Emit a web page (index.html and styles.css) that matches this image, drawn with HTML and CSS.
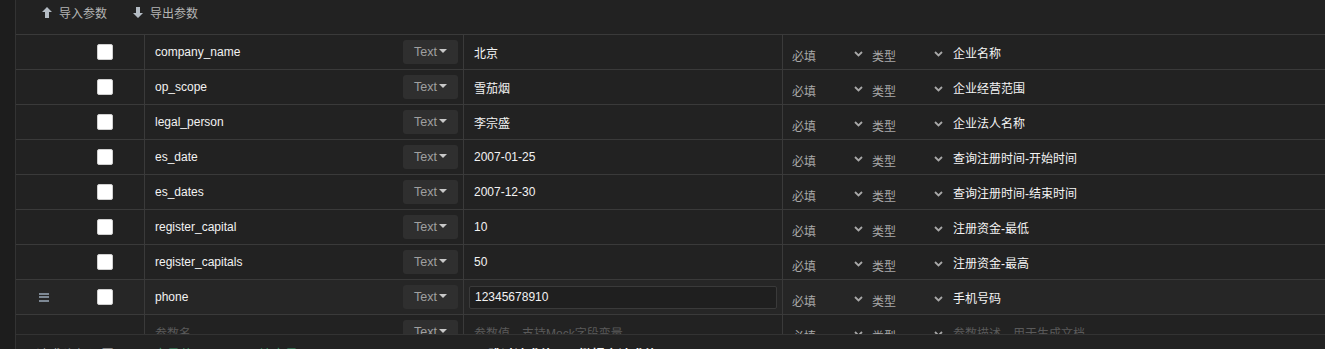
FILE: index.html
```html
<!DOCTYPE html>
<html lang="zh">
<head>
<meta charset="utf-8">
<link rel="stylesheet" href="styles.css">
</head>
<body>
<div class="page">
  <div class="strip"></div>
  <div class="main">
    <div class="toolbar">
      <span class="tool"><svg class="arr" width="10" height="11" viewBox="0 0 10 11"><path d="M5 0 L10 5 L7 5 L7 11 L3 11 L3 5 L0 5 Z" fill="#b4bcc4"/></svg>导入参数</span>
      <span class="tool"><svg class="arr" width="10" height="11" viewBox="0 0 10 11"><path d="M5 11 L10 6 L7 6 L7 0 L3 0 L3 6 L0 6 Z" fill="#b4bcc4"/></svg>导出参数</span>
    </div>
    <div class="table">
      <div class="row">
        <div class="c1"><span class="handle"></span><span class="cb"></span></div>
        <div class="c2"><span class="name">company_name</span><span class="type">Text<i class="caret"></i></span></div>
        <div class="c3"><span class="val">北京</span></div>
        <div class="c4"><span class="sel">必填<svg class="chev" width="9" height="6" viewBox="0 0 9 6"><path d="M1 1 L4.5 4.5 L8 1" stroke="#a8a8a8" stroke-width="1.8" fill="none"/></svg></span><span class="sel">类型<svg class="chev" width="9" height="6" viewBox="0 0 9 6"><path d="M1 1 L4.5 4.5 L8 1" stroke="#a8a8a8" stroke-width="1.8" fill="none"/></svg></span><span class="desc">企业名称</span></div>
      </div>
      <div class="row">
        <div class="c1"><span class="handle"></span><span class="cb"></span></div>
        <div class="c2"><span class="name">op_scope</span><span class="type">Text<i class="caret"></i></span></div>
        <div class="c3"><span class="val">雪茄烟</span></div>
        <div class="c4"><span class="sel">必填<svg class="chev" width="9" height="6" viewBox="0 0 9 6"><path d="M1 1 L4.5 4.5 L8 1" stroke="#a8a8a8" stroke-width="1.8" fill="none"/></svg></span><span class="sel">类型<svg class="chev" width="9" height="6" viewBox="0 0 9 6"><path d="M1 1 L4.5 4.5 L8 1" stroke="#a8a8a8" stroke-width="1.8" fill="none"/></svg></span><span class="desc">企业经营范围</span></div>
      </div>
      <div class="row">
        <div class="c1"><span class="handle"></span><span class="cb"></span></div>
        <div class="c2"><span class="name">legal_person</span><span class="type">Text<i class="caret"></i></span></div>
        <div class="c3"><span class="val">李宗盛</span></div>
        <div class="c4"><span class="sel">必填<svg class="chev" width="9" height="6" viewBox="0 0 9 6"><path d="M1 1 L4.5 4.5 L8 1" stroke="#a8a8a8" stroke-width="1.8" fill="none"/></svg></span><span class="sel">类型<svg class="chev" width="9" height="6" viewBox="0 0 9 6"><path d="M1 1 L4.5 4.5 L8 1" stroke="#a8a8a8" stroke-width="1.8" fill="none"/></svg></span><span class="desc">企业法人名称</span></div>
      </div>
      <div class="row">
        <div class="c1"><span class="handle"></span><span class="cb"></span></div>
        <div class="c2"><span class="name">es_date</span><span class="type">Text<i class="caret"></i></span></div>
        <div class="c3"><span class="val">2007-01-25</span></div>
        <div class="c4"><span class="sel">必填<svg class="chev" width="9" height="6" viewBox="0 0 9 6"><path d="M1 1 L4.5 4.5 L8 1" stroke="#a8a8a8" stroke-width="1.8" fill="none"/></svg></span><span class="sel">类型<svg class="chev" width="9" height="6" viewBox="0 0 9 6"><path d="M1 1 L4.5 4.5 L8 1" stroke="#a8a8a8" stroke-width="1.8" fill="none"/></svg></span><span class="desc">查询注册时间-开始时间</span></div>
      </div>
      <div class="row">
        <div class="c1"><span class="handle"></span><span class="cb"></span></div>
        <div class="c2"><span class="name">es_dates</span><span class="type">Text<i class="caret"></i></span></div>
        <div class="c3"><span class="val">2007-12-30</span></div>
        <div class="c4"><span class="sel">必填<svg class="chev" width="9" height="6" viewBox="0 0 9 6"><path d="M1 1 L4.5 4.5 L8 1" stroke="#a8a8a8" stroke-width="1.8" fill="none"/></svg></span><span class="sel">类型<svg class="chev" width="9" height="6" viewBox="0 0 9 6"><path d="M1 1 L4.5 4.5 L8 1" stroke="#a8a8a8" stroke-width="1.8" fill="none"/></svg></span><span class="desc">查询注册时间-结束时间</span></div>
      </div>
      <div class="row">
        <div class="c1"><span class="handle"></span><span class="cb"></span></div>
        <div class="c2"><span class="name">register_capital</span><span class="type">Text<i class="caret"></i></span></div>
        <div class="c3"><span class="val">10</span></div>
        <div class="c4"><span class="sel">必填<svg class="chev" width="9" height="6" viewBox="0 0 9 6"><path d="M1 1 L4.5 4.5 L8 1" stroke="#a8a8a8" stroke-width="1.8" fill="none"/></svg></span><span class="sel">类型<svg class="chev" width="9" height="6" viewBox="0 0 9 6"><path d="M1 1 L4.5 4.5 L8 1" stroke="#a8a8a8" stroke-width="1.8" fill="none"/></svg></span><span class="desc">注册资金-最低</span></div>
      </div>
      <div class="row">
        <div class="c1"><span class="handle"></span><span class="cb"></span></div>
        <div class="c2"><span class="name">register_capitals</span><span class="type">Text<i class="caret"></i></span></div>
        <div class="c3"><span class="val">50</span></div>
        <div class="c4"><span class="sel">必填<svg class="chev" width="9" height="6" viewBox="0 0 9 6"><path d="M1 1 L4.5 4.5 L8 1" stroke="#a8a8a8" stroke-width="1.8" fill="none"/></svg></span><span class="sel">类型<svg class="chev" width="9" height="6" viewBox="0 0 9 6"><path d="M1 1 L4.5 4.5 L8 1" stroke="#a8a8a8" stroke-width="1.8" fill="none"/></svg></span><span class="desc">注册资金-最高</span></div>
      </div>
      <div class="row hover">
        <div class="c1"><span class="handle on"><i></i><i></i><i></i></span><span class="cb"></span></div>
        <div class="c2"><span class="name">phone</span><span class="type">Text<i class="caret"></i></span></div>
        <div class="c3"><span class="input">12345678910</span></div>
        <div class="c4"><span class="sel">必填<svg class="chev" width="9" height="6" viewBox="0 0 9 6"><path d="M1 1 L4.5 4.5 L8 1" stroke="#a8a8a8" stroke-width="1.8" fill="none"/></svg></span><span class="sel">类型<svg class="chev" width="9" height="6" viewBox="0 0 9 6"><path d="M1 1 L4.5 4.5 L8 1" stroke="#a8a8a8" stroke-width="1.8" fill="none"/></svg></span><span class="desc">手机号码</span></div>
      </div>
      <div class="row last">
        <div class="c1"></div>
        <div class="c2"><span class="name ph">参数名</span><span class="type">Text<i class="caret"></i></span></div>
        <div class="c3"><span class="val ph">参数值，支持Mock字段变量</span></div>
        <div class="c4"><span class="sel">必填<svg class="chev" width="9" height="6" viewBox="0 0 9 6"><path d="M1 1 L4.5 4.5 L8 1" stroke="#a8a8a8" stroke-width="1.8" fill="none"/></svg></span><span class="sel">类型<svg class="chev" width="9" height="6" viewBox="0 0 9 6"><path d="M1 1 L4.5 4.5 L8 1" stroke="#a8a8a8" stroke-width="1.8" fill="none"/></svg></span><span class="desc ph">参数描述，用于生成文档</span></div>
      </div>
    </div>
    <div class="bottom">
      <span class="b-grey">请求头部设置</span>
      <span class="b-green">变量使用</span>
      <span class="b-green">环境变量</span>
      <span class="b-white">跳过请求体，一键提交请求体</span>
    </div>
  </div>
</div>
</body>
</html>
```

FILE: styles.css
```css
* { box-sizing: border-box; margin: 0; padding: 0; }
html, body { width: 1325px; height: 349px; overflow: hidden; background: #222222; }
body {
  font-family: "Liberation Sans", Arial, "Noto Sans CJK SC", sans-serif;
  font-size: 12px;
  color: #e8e8e8;
}
.page { display: flex; height: 349px; }
.strip { width: 16px; flex: none; background: #1d1d1d; border-right: 1px solid #333333; }
.main { flex: 1; display: flex; flex-direction: column; min-width: 0; }
.toolbar {
  height: 34px; flex: none;
  display: flex; align-items: center; gap: 26px;
  padding-left: 26px; padding-bottom: 10px;
  color: #b4b4b4;
}
.tool { display: flex; align-items: center; gap: 7px; }
.table { border-top: 1px solid #3a3a3a; flex: none; height: 300px; overflow: hidden; }
.row {
  display: grid;
  grid-template-columns: 129px 319px 319px 1fr;
  height: 35px;
  border-bottom: 1px solid #3a3a3a;
  background: #222222;
}
.row.hover { background: #262626; }
.row > div { display: flex; align-items: center; border-right: 1px solid #3a3a3a; }
.row > div.c4 { border-right: none; }
.c1 { padding-left: 23px; }
.handle { width: 10px; height: 9px; display: flex; flex-direction: column; justify-content: space-between; margin-right: 48px; }
.handle i { display: block; height: 2px; background: #7d8894; }
.cb { width: 16px; height: 16px; background: #ffffff; border-radius: 2px; border: 1px solid #cfcfcf; }
.c2 { justify-content: space-between; padding: 0 5px 0 10px; }
.name { color: #f2f2f2; }
.type {
  width: 55px; height: 24px; background: #2f2f2f; border-radius: 3px;
  color: #a0a0a0; font-size: 12.5px;
  display: flex; align-items: center; justify-content: center; gap: 2px;
}
.caret { width: 0; height: 0; border-left: 4px solid transparent; border-right: 4px solid transparent; border-top: 4px solid #c8c8c8; margin-top: -2px; }
.c3 { padding: 0 5px 0 10px; }
.val { color: #f2f2f2; }
.input {
  flex: 1; height: 23px; border: 1px solid #3a3a3a; background: #1f1f1f; border-radius: 2px;
  display: flex; align-items: center; padding-left: 5px; margin-left: -5px; color: #f2f2f2;
}
.c4 { padding-left: 9px; }
.sel { width: 71px; margin-right: 9px; display: flex; align-items: center; justify-content: space-between; color: #a8a8a8; padding-top: 6px; padding-right: 0; }
.sel + .desc { margin-left: 1px; }
.chev { margin-top: -2px; }
.desc { color: #f4f4f4; }
.ph { color: #5a5a5a; }
.bottom {
  flex: 1; border-top: 1px solid #333333; background: #222222;
  display: flex; align-items: flex-start; padding-top: 9px; padding-left: 20px; gap: 40px;
  font-size: 13px;
}
.b-grey { color: #9a9a9a; }
.b-green { color: #3f9a6a; }
.b-white { color: #f0f0f0; font-weight: bold; margin-left: 150px; }
```
